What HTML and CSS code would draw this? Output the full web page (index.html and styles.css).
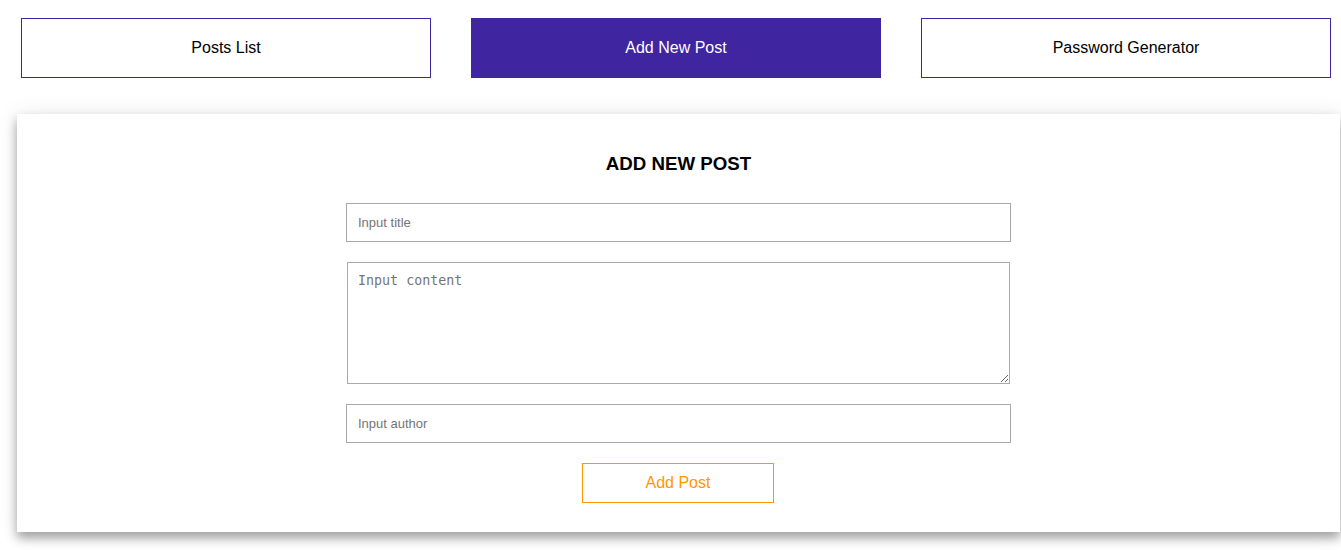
FILE: index.html
```html
<!DOCTYPE html>
<html lang="en">
<head>
<meta charset="utf-8">
<title>Add New Post</title>
<link rel="stylesheet" href="styles.css">
</head>
<body>
<nav class="nav">
  <button class="nav-btn">Posts List</button>
  <button class="nav-btn nav-btn--active">Add New Post</button>
  <button class="nav-btn">Password Generator</button>
</nav>
<section class="card">
  <h2 class="card-title">ADD NEW POST</h2>
  <form class="post-form">
    <input class="field" type="text" placeholder="Input title">
    <textarea class="field field--area" placeholder="Input content"></textarea>
    <input class="field" type="text" placeholder="Input author">
    <button type="button" class="submit-btn">Add Post</button>
  </form>
</section>
</body>
</html>
```
FILE: styles.css
```css
* { box-sizing: border-box; }
html, body { margin: 0; padding: 0; background: #fff; }
body {
  font-family: "Liberation Sans", Arial, sans-serif;
  color: #000;
  overflow: hidden;
  min-height: 550px;
}
.nav {
  display: flex;
  gap: 40px;
  padding: 18px 10px 0 21px;
}
.nav-btn {
  width: 410px;
  height: 60px;
  border: 1px solid #3f25a0;
  background: #fff;
  color: #000;
  font-family: "Liberation Sans", Arial, sans-serif;
  font-size: 16px;
  padding: 0;
  cursor: pointer;
}
.nav-btn--active {
  background: #3f25a0;
  color: #fff;
}
.card {
  margin: 36px 0 18px 17px;
  width: 1323px;
  background: #fff;
  padding: 39px 0 29px;
  box-shadow: 0 0 22px rgba(0, 0, 0, 0.08), 0 6px 10px rgba(0, 0, 0, 0.35);
}
.card-title {
  margin: 0 0 28px;
  text-align: center;
  font-size: 18.72px;
  line-height: 22px;
  font-weight: bold;
}
.post-form {
  display: flex;
  flex-direction: column;
  align-items: center;
  gap: 20px;
}
.field {
  width: 665px;
  height: 39px;
  border: 1px solid #a9a9a9;
  padding: 0 10px 0 11px;
  font-family: "Liberation Sans", Arial, sans-serif;
  font-size: 13px;
  color: #000;
  background: #fff;
  outline: none;
}
.field::placeholder { color: #757575; }
.field--area {
  width: 663px;
  height: 122px;
  padding: 10px;
  font-family: "DejaVu Sans Mono", "Liberation Mono", monospace;
  font-size: 13.333px;
  resize: both;
}
.submit-btn {
  width: 192px;
  height: 40px;
  margin-right: 1px;
  border: 1px solid #ff9800;
  background: #fff;
  color: #ff9800;
  font-family: "Liberation Sans", Arial, sans-serif;
  font-size: 16px;
  padding: 0;
  cursor: pointer;
}
```
